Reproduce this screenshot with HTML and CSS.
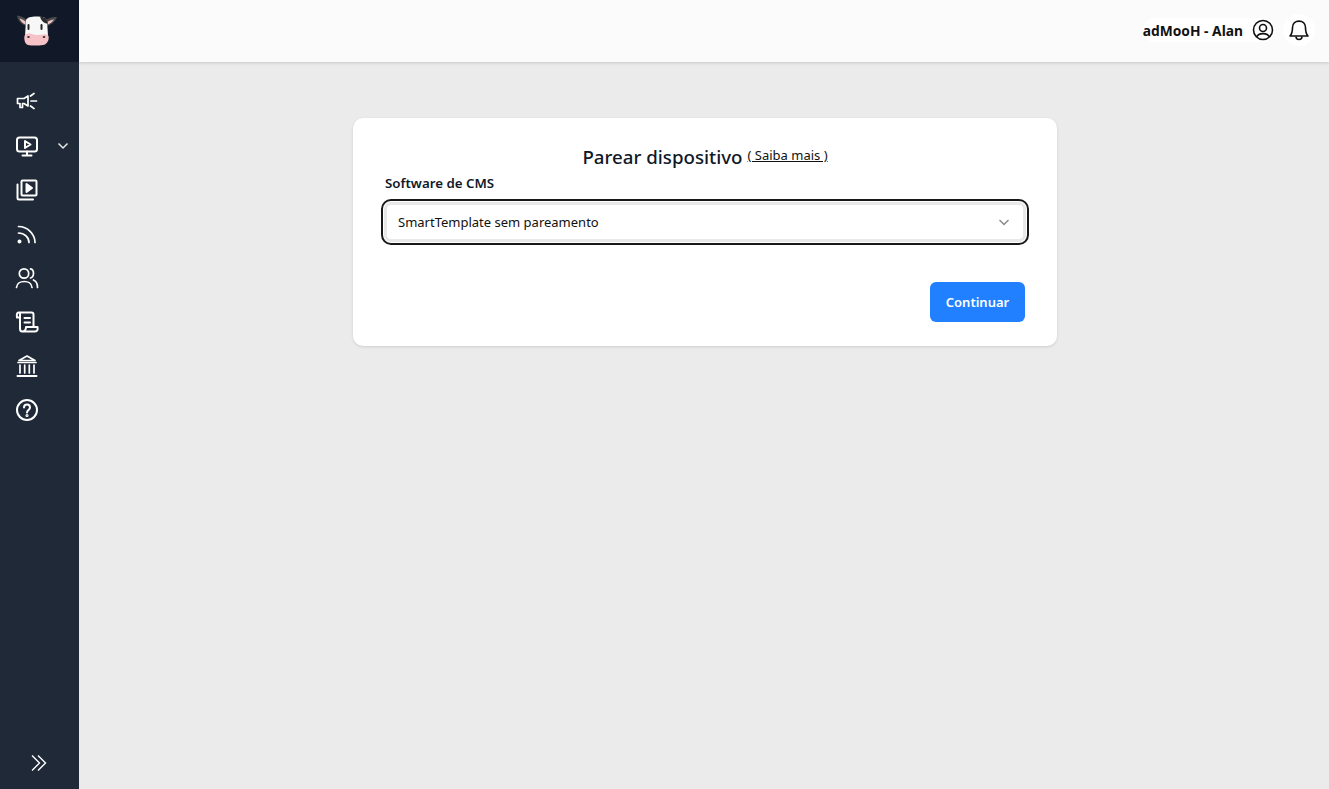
FILE: index.html
```html
<!DOCTYPE html>
<html lang="pt-BR">
<head>
<meta charset="utf-8">
<title>Parear dispositivo</title>
<link rel="stylesheet" href="styles.css">
</head>
<body>
<div class="app">
  <aside class="sidebar">
    <div class="logo">
      <svg width="42" height="32" viewBox="0 0 42 32">
        <path d="M11 6 C8 3.500 5 2 1 1.500 C1.500 6 5 11 11 12Z" fill="#4a4a4a"/>
        <path d="M9.500 7.500 C7.500 6 6 5 3.500 4.500 C4.500 7 6.500 9.500 9.500 10.500Z" fill="#f4c6c8"/>
        <path d="M30 6 C33.500 3.500 37 3 41 3 C39.500 7 36 11 30 12Z" fill="#4a4a4a"/>
        <path d="M32 7.500 C34 6.500 36 5.500 38 5.500 C36.500 7.500 34.500 9.500 32 10.500Z" fill="#f4c6c8"/>
        <path d="M10 6 C11 3.500 15 2.500 20.500 2.500 C26 2.500 30 3.500 31 6 L32 22 L9 22Z" fill="#f7f7f7"/>
        <path d="M24 2.700 C27 2.800 30.500 3.500 31 6 L31.300 9.500 C28 9.500 25.500 7 24 2.700Z" fill="#2b2b2b"/>
        <rect x="11.500" y="10" width="2" height="6" rx="1" fill="#222"/>
        <rect x="24.500" y="10" width="2" height="6" rx="1" fill="#222"/>
        <path d="M8.500 22 C9 18.500 14 19 20 21 C25 21 31 18.500 32.500 22 C33.500 26 31 30.500 27 31 C22 31.800 16 31.800 12 31 C9 30 7.800 25.500 8.500 22Z" fill="#f6c2c8"/>
        <ellipse cx="12.500" cy="23" rx="1.300" ry="1" fill="#333"/>
        <ellipse cx="28" cy="23" rx="1.300" ry="1" fill="#333"/>
      </svg>
    </div>
    <nav class="nav">
      <a class="nav-item">
        <svg class="ico" viewBox="0 0 24 24"><path class="thin" d="M2.500 8.500 H9 L13 6 V16 L9 13.500 H7.500 V17.500 H5 V13.500 H2.500Z"/><path class="thin" d="M16 11 H21.500 M15.500 6 L19 3.500 M15.500 16 L19 18.500" stroke-dasharray="3 1"/></svg>
      </a>
      <a class="nav-item">
        <svg class="ico" viewBox="0 0 24 24"><rect x="2" y="3.500" width="20" height="14" rx="2.500"/><path d="M10 7 L15.500 10.500 L10 14Z"/><path d="M12 17.500 V21 M7.500 21.500 H16.500"/></svg>
        <svg class="chev" viewBox="0 0 12 12"><path d="M1.500 3.500 L6 8 L10.500 3.500"/></svg>
      </a>
      <a class="nav-item">
        <svg class="ico" viewBox="0 0 24 24"><rect x="6.500" y="2.500" width="15" height="15" rx="1"/><path d="M11.500 6 L17 10 L11.500 14Z" class="solid"/><path d="M2.500 6.500 V20 A1.500 1.500 0 0 0 4 21.500 H18"/></svg>
      </a>
      <a class="nav-item">
        <svg class="ico" viewBox="0 0 24 24"><path class="thin" d="M3.500 4.500 C12.500 4.500 20 12 20 20.500 M3.500 11 C9.500 11 14 15.500 14 20.500"/><circle cx="4.500" cy="19.500" r="1" class="solid"/></svg>
      </a>
      <a class="nav-item">
        <svg class="ico" viewBox="0 0 24 24"><circle class="thin" cx="9" cy="7.500" r="4.700"/><path class="thin" d="M1.500 21.500 C2 13.500 16.500 13.500 17 21.500"/><path class="thin" d="M15.500 2.800 C19.500 3.500 19.500 11 15.500 12 M18.500 14 C21 15 22.500 17.500 22.500 21.500"/></svg>
      </a>
      <a class="nav-item">
        <svg class="ico" viewBox="0 0 24 24"><path d="M7 21.500 H20 C22.500 21.500 23 19.500 22.500 17 H11 C11 19.500 10 21.500 7 21.500 C5 21.500 5 20 5 18.500 V4 C5 3 4.500 2.500 3.500 2.500 C2 2.500 1.500 4 2 7.500 H5 M3.500 2.500 H16.500 C18 2.500 18.500 3.500 18.500 4.500 V17"/><path d="M9.500 8 H15 M9.500 12.500 H15"/></svg>
      </a>
      <a class="nav-item">
        <svg class="ico" viewBox="0 0 24 24"><path class="thin" d="M4 6.500 L12 2 L20 6.500 Z"/><path class="thin" d="M3 8.500 H21 M5 11 V19 M9.700 11 V19 M14.300 11 V19 M19 11 V19"/><path d="M2.500 22 H21.500"/></svg>
      </a>
      <a class="nav-item">
        <svg class="ico" viewBox="0 0 24 24"><circle cx="12" cy="12" r="10"/><path d="M9 9.500 C9 5.500 15 5.500 15 9.500 C15 12 12 12 12 14.500"/><circle cx="12" cy="17.500" r="0.600"/></svg>
      </a>
    </nav>
    <button class="collapse" type="button">
      <svg viewBox="0 0 18 18" width="18" height="18"><path d="M2 1.500 L9.500 9 L2 16.500 M8 1.500 L15.500 9 L8 16.500"/></svg>
    </button>
  </aside>
  <div class="content">
    <header class="topbar">
      <div class="user-pill">
        <span class="user-name">adMooH - Alan</span>
        <svg class="top-ico" viewBox="0 0 24 24"><circle cx="12" cy="12" r="9.500"/><circle cx="12" cy="10" r="3.500"/><path d="M5.500 19 C7.500 14.500 16.500 14.500 18.500 19"/></svg>
      </div>
      <span class="bell-wrap">
        <svg class="top-ico" viewBox="0 0 24 24"><path d="M3 18 C5.500 15.500 5.500 13 5.500 9.500 C5.500 1 18.500 1 18.500 9.500 C18.500 13 18.500 15.500 21 18Z"/><path d="M9 18.500 C9 22.500 15 22.500 15 18.500"/></svg>
      </span>
    </header>
    <main class="main">
      <section class="card">
        <div class="card-title">
          <h1>Parear dispositivo</h1>
          <a class="more">( Saiba mais )</a>
        </div>
        <label class="field-label">Software de CMS</label>
        <div class="select-focus">
          <div class="select">
            <span>SmartTemplate sem pareamento</span>
            <svg viewBox="0 0 12 12" width="12" height="12"><path d="M1.500 4 L6 8.500 L10.500 4"/></svg>
          </div>
        </div>
        <div class="actions">
          <button class="primary" type="button">Continuar</button>
        </div>
      </section>
    </main>
  </div>
</div>
</body>
</html>
```

FILE: styles.css
```css
* { box-sizing: border-box; }
html, body { margin: 0; height: 100%; }
body { font-family: "Noto Sans", "Open Sans", sans-serif; color: #111827; background: #ebebeb; overflow: hidden; }
.app { display: flex; height: 789px; }
.sidebar { width: 79px; flex: none; background: #1f2937; display: flex; flex-direction: column; }
.logo { height: 62px; background: #111827; display: flex; justify-content: center; align-items: center; padding: 0 5px 2px 0; }
.nav { flex: 1; display: flex; flex-direction: column; padding-top: 28px; gap: 20px; }
.nav-item { height: 24px; display: flex; align-items: center; padding-left: 15px; position: relative; }
.ico { width: 24px; height: 24px; fill: none; stroke: #fff; stroke-width: 2; stroke-linejoin: round; stroke-linecap: round; }
.ico .thin { stroke-width: 1.700; }
.ico .solid { fill: #fff; }
.chev { width: 12px; height: 12px; margin-left: 18px; fill: none; stroke: #e5e7eb; stroke-width: 1.500; }
.collapse { background: none; border: 0; padding: 0; height: 18px; margin: 0 0 17px 30px; width: 18px; display: block; }
.collapse svg { fill: none; stroke: #fff; stroke-width: 1.400; display: block; }
.content { flex: 1; display: flex; flex-direction: column; min-width: 0; }
.topbar { height: 62px; background: #fbfbfb; box-shadow: 0 1px 3px rgba(0,0,0,.15); display: flex; align-items: center; justify-content: flex-end; padding: 0 14px 2px 0; }
.user-pill { display: flex; align-items: center; gap: 8px; height: 24px; background: #fff; border-radius: 12px; }
.user-name { font-size: 13.800px; font-weight: 700; color: #111; }
.top-ico { width: 24px; height: 24px; display: block; fill: none; stroke: #111; stroke-width: 1.600; stroke-linejoin: round; }
.bell-wrap { margin-left: 8px; width: 32px; height: 32px; border-radius: 50%; background: #fff; display: flex; align-items: center; justify-content: center; }
.main { flex: 1; display: flex; justify-content: center; align-items: flex-start; padding: 56px 0 0 2px; }
.card { width: 704px; height: 228px; background: #fff; border-radius: 10px; box-shadow: 0 1px 3px rgba(0,0,0,.12); padding: 26px 32px 24px; }
.card-title { display: flex; justify-content: center; align-items: flex-start; gap: 5px; height: 30px; }
.card-title h1 { margin: 0; font-size: 18.700px; font-weight: 500; color: #111827; line-height: 26px; }
.more { font-size: 13px; line-height: 23px; color: #111; text-decoration: underline; }
.field-label { display: block; font-size: 13.300px; font-weight: 600; line-height: 18px; height: 25px; color: #111827; }
.select-focus { margin: 0 -4px; height: 46px; border: 2px solid #18181b; border-radius: 10px; padding: 1px; }
.select { height: 40px; border: 3px solid #e8e8e8; border-radius: 7px; background: #fff; display: flex; align-items: center; justify-content: space-between; padding: 0 13px 0 11px; font-size: 13px; color: #111; }
.select svg { fill: none; stroke: #888; stroke-width: 1.400; }
.actions { display: flex; justify-content: flex-end; margin-top: 37px; }
.primary { width: 95px; height: 40px; border: 0; border-radius: 6px; background: #2080ff; color: #fff; font: 600 13px "Noto Sans", sans-serif; }
```
